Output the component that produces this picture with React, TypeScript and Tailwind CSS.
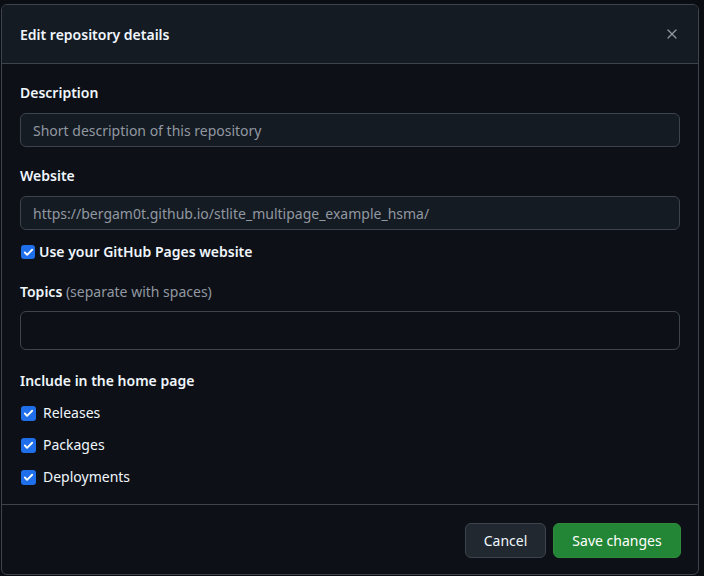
import { X, Check } from "lucide-react";

const Box = ({ big }: { big?: boolean }) => (
  <span
    className={`flex items-center justify-center rounded-[3px] bg-[#1f6feb] ${
      big ? "w-[14px] h-[14px]" : "w-[15px] h-[15px]"
    }`}
  >
    <Check className="w-[11px] h-[11px] text-white" strokeWidth={4} />
  </span>
);

const includes = ["Releases", "Packages", "Deployments"];

export default function App() {
  return (
    <div
      className="w-[704px] h-[576px] overflow-hidden bg-[#0a0d12] pt-[4px] pl-[1px]"
      style={{ fontFamily: '"Segoe UI", "Noto Sans", sans-serif' }}
    >
      <div className="w-[698px] h-[571px] flex flex-col rounded-[6px] border border-[#3d444d] bg-[#0d1117] text-[#f0f6fc] overflow-hidden">
        <div className="h-[59px] shrink-0 flex items-center justify-between pl-[18px] pr-[18px] bg-[#151b23] border-b border-[#3d444d]">
          <h1 className="text-[14px] font-semibold">Edit repository details</h1>
          <X className="w-[16px] h-[16px] text-[#9198a1]" strokeWidth={1.8} />
        </div>

        <div className="flex-1 flex flex-col px-[18px] pt-[19px] text-[14px]">
          <label className="font-semibold leading-[20px]">Description</label>
          <div className="mt-[10px] h-[34px] rounded-[6px] border border-[#3d444d] bg-[#151b23] flex items-center px-[12px] text-[#9198a1]">
            Short description of this repository
          </div>

          <label className="mt-[19px] font-semibold leading-[20px]">Website</label>
          <div className="mt-[10px] h-[34px] rounded-[6px] border border-[#3d444d] bg-[#151b23] flex items-center px-[12px] text-[#9198a1]">
            https://bergam0t.github.io/stlite_multipage_example_hsma/
          </div>
          <div className="mt-[12px] flex items-center gap-[4px] font-semibold leading-[20px] pl-[1px]">
            <Box big />
            <span>Use your GitHub Pages website</span>
          </div>

          <div className="mt-[20px] leading-[20px]">
            <span className="font-semibold">Topics</span>{" "}
            <span className="text-[#9198a1]">(separate with spaces)</span>
          </div>
          <div className="mt-[9px] h-[39px] rounded-[6px] border border-[#3d444d]" />

          <label className="mt-[21px] font-semibold leading-[20px]">
            Include in the home page
          </label>
          <div className="mt-[12px] flex flex-col gap-[12px]">
            {includes.map((t) => (
              <div key={t} className="flex items-center gap-[7px] leading-[20px] pl-[1px]">
                <Box />
                <span>{t}</span>
              </div>
            ))}
          </div>
        </div>

        <div className="h-[70px] shrink-0 border-t border-[#3d444d] flex items-center justify-end gap-[7px] pr-[17px] pt-[2px] text-[14px]">
          <button className="h-[35px] w-[81px] rounded-[6px] border border-[#3d444d] bg-[#212830] text-[#f0f6fc]">
            Cancel
          </button>
          <button className="h-[35px] w-[128px] rounded-[6px] border border-[#2f8a3c] bg-[#238636] text-white">
            Save changes
          </button>
        </div>
      </div>
    </div>
  );
}
